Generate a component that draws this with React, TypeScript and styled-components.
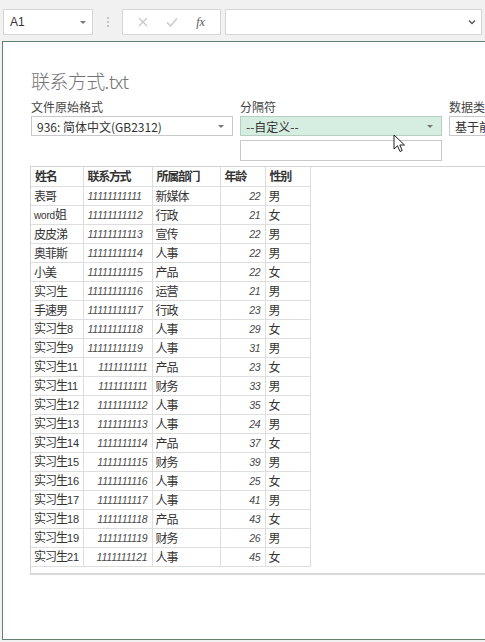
import React from "react";
import styled, { createGlobalStyle } from "styled-components";

const Global = createGlobalStyle`
  html, body { margin: 0; padding: 0; overflow: hidden; background: #f1f1f1; }
  body { font-family: "Noto Sans CJK SC", "Noto Sans", sans-serif; color: #333; }
  * { box-sizing: border-box; }
`;

const Page = styled.div`
  width: 485px;
  height: 642px;
  position: relative;
  overflow: hidden;
  background: #f1f1f1;
`;

const Toolbar = styled.div`
  height: 41px;
  display: flex;
  align-items: flex-start;
  padding: 9px 3px 0 3px;
`;

const NameBox = styled.div`
  width: 90px;
  height: 26px;
  background: #fff;
  border: 1px solid #d6d6d6;
  display: flex;
  align-items: center;
  justify-content: space-between;
  padding: 0 6px 0 6px;
  font-family: "Liberation Sans", Arial, sans-serif;
  font-size: 12px;
  color: #333;
`;

const Caret = styled.span`
  width: 0;
  height: 0;
  border-left: 3px solid transparent;
  border-right: 3px solid transparent;
  border-top: 3px solid #777;
`;

const Dots = styled.div`
  width: 29px;
  height: 26px;
  display: flex;
  flex-direction: column;
  align-items: center;
  justify-content: center;
  gap: 2px;
  & > i { width: 2px; height: 2px; background: #c4c4c4; display: block; }
`;

const FxBox = styled.div`
  width: 99px;
  height: 26px;
  background: #fff;
  border: 1px solid #d6d6d6;
  display: flex;
  align-items: center;
  justify-content: space-around;
  padding: 0 6px;
`;

const FxText = styled.span`
  font-family: "Liberation Serif", serif;
  font-style: italic;
  font-size: 12px;
  color: #555;
`;

const FormulaInput = styled.div`
  flex: 1;
  height: 26px;
  margin-left: 4px;
  background: #fff;
  border: 1px solid #d6d6d6;
  display: flex;
  align-items: center;
  justify-content: flex-end;
  padding-right: 5px;
`;

const Dialog = styled.div`
  margin-left: 2px;
  height: 599px;
  background: #fff;
  border: 1px solid #61806f;
  border-right: none;
  padding: 29px 0 0 28px;
`;

const Title = styled.div`
  font-size: 19px;
  line-height: 19px;
  height: 19px;
  color: #747474;
  font-weight: 300;
  letter-spacing: -0.6px;
  white-space: nowrap;
`;

const OptionsRow = styled.div`
  display: grid;
  grid-template-columns: 202px 202px 202px;
  column-gap: 7px;
  margin-top: 10px;
  white-space: nowrap;
`;

const Field = styled.div`
  display: flex;
  flex-direction: column;
`;

const Label = styled.div`
  font-size: 12px;
  line-height: 14px;
  color: #444;
  height: 14px;
`;

const Select = styled.div<{ $active?: boolean }>`
  margin-top: 2px;
  height: 20px;
  border: 1px solid ${(p) => (p.$active ? "#b7cfc1" : "#c9c9c9")};
  background: ${(p) => (p.$active ? "#d6ede2" : "#fff")};
  display: flex;
  align-items: center;
  justify-content: space-between;
  padding: 0 8px 0 5px;
  font-size: 12px;
  color: #333;
  font-family: "Noto Sans CJK SC", sans-serif;
`;

const SmallCaret = styled.span`
  width: 0;
  height: 0;
  border-left: 3px solid transparent;
  border-right: 3px solid transparent;
  border-top: 3px solid #777;
`;

const TextInput = styled.div`
  margin-top: 4px;
  height: 21px;
  border: 1px solid #c9c9c9;
  background: #fff;
`;

const Preview = styled.div`
  margin-top: 5px;
  margin-left: -1px;
  border-top: 1px solid #d4d4d4;
  border-left: 1px solid #d4d4d4;
  border-bottom: 2px solid #d9d9d9;
  padding-bottom: 6px;
`;

const Table = styled.table`
  border-collapse: collapse;
  table-layout: fixed;
  width: 279px;
  border-right: 1px solid #dadada;
`;

const Tr = styled.tr`
  height: 19px;
`;

const Th = styled.th<{ $w: number }>`
  width: ${(p) => p.$w}px;
  height: 18px;
  padding: 0 3px 0 4px;
  text-align: left;
  font-size: 12px;
  font-weight: 700;
  letter-spacing: -1.3px;
  color: #333;
  border: 1px solid #dedede;
  border-top: none;
  border-left: none;
  line-height: 16px;
  white-space: nowrap;
  overflow: hidden;
`;

const Td = styled.td<{ $num?: boolean; $right?: boolean }>`
  height: 18px;
  padding: 0 4px 0 ${(p) => (p.$num ? "4px" : "3px")};
  border: 1px solid #dedede;
  border-left: none;
  text-align: ${(p) => (p.$right ? "right" : "left")};
  font-size: ${(p) => (p.$num ? "10.5px" : "12px")};
  font-style: ${(p) => (p.$num ? "italic" : "normal")};
  font-family: ${(p) =>
    p.$num ? '"Liberation Sans", Arial, sans-serif' : '"Noto Sans CJK SC", sans-serif'};
  letter-spacing: ${(p) => (p.$num ? "-0.2px" : "-1px")};
  color: ${(p) => (p.$num ? "#4a4a4a" : "#333")};
  line-height: 16px;
  white-space: nowrap;
  overflow: hidden;
`;

const Latin = styled.span<{ $size: number }>`
  font-family: "Liberation Sans", Arial, sans-serif;
  font-size: ${(p) => p.$size}px;
  letter-spacing: -0.2px;
  line-height: 16px;
`;

const Cursor = styled.svg`
  position: absolute;
  left: 393px;
  top: 134px;
`;

type Row = [string, string, string, number, string];

const rows: Row[] = [
  ["表哥", "11111111111", "新媒体", 22, "男"],
  ["word姐", "11111111112", "行政", 21, "女"],
  ["皮皮涕", "11111111113", "宣传", 22, "男"],
  ["奥菲斯", "11111111114", "人事", 22, "男"],
  ["小美", "11111111115", "产品", 22, "女"],
  ["实习生", "11111111116", "运营", 21, "男"],
  ["手速男", "11111111117", "行政", 23, "男"],
  ["实习生8", "11111111118", "人事", 29, "女"],
  ["实习生9", "11111111119", "人事", 31, "男"],
  ["实习生11", "1111111111", "产品", 23, "女"],
  ["实习生11", "1111111111", "财务", 33, "男"],
  ["实习生12", "1111111112", "人事", 35, "女"],
  ["实习生13", "1111111113", "人事", 24, "男"],
  ["实习生14", "1111111114", "产品", 37, "女"],
  ["实习生15", "1111111115", "财务", 39, "男"],
  ["实习生16", "1111111116", "人事", 25, "女"],
  ["实习生17", "1111111117", "人事", 41, "男"],
  ["实习生18", "1111111118", "产品", 43, "女"],
  ["实习生19", "1111111119", "财务", 26, "男"],
  ["实习生21", "1111111121", "人事", 45, "女"],
];

function NameCell({ name }: { name: string }) {
  const m = name.match(/^([A-Za-z]+)(.*)$/);
  if (m) {
    return (
      <>
        <Latin $size={10}>{m[1]}</Latin>
        {m[2]}
      </>
    );
  }
  const n = name.match(/^(.*?)(\d+)$/);
  if (n) {
    return (
      <>
        {n[1]}
        <Latin $size={11}>{n[2]}</Latin>
      </>
    );
  }
  return <>{name}</>;
}

export default function App() {
  return (
    <Page>
      <Global />
      <Toolbar>
        <NameBox>
          <span>A1</span>
          <Caret />
        </NameBox>
        <Dots>
          <i />
          <i />
          <i />
        </Dots>
        <FxBox>
          <svg width="10" height="10" viewBox="0 0 10 10">
            <path d="M1 1 L9 9 M9 1 L1 9" stroke="#c8c8c8" strokeWidth="1.3" />
          </svg>
          <svg width="12" height="10" viewBox="0 0 12 10">
            <path d="M1 5.5 L4.5 9 L11 1.5" stroke="#c8c8c8" strokeWidth="1.4" fill="none" />
          </svg>
          <FxText>fx</FxText>
        </FxBox>
        <FormulaInput>
          <svg width="8" height="6" viewBox="0 0 8 6">
            <path d="M1 1.5 L4 4.5 L7 1.5" stroke="#555" strokeWidth="1.3" fill="none" />
          </svg>
        </FormulaInput>
      </Toolbar>
      <Dialog>
        <Title>联系方式.txt</Title>
        <OptionsRow>
          <Field>
            <Label>文件原始格式</Label>
            <Select>
              <span>936: 简体中文(GB2312)</span>
              <SmallCaret />
            </Select>
          </Field>
          <Field>
            <Label>分隔符</Label>
            <Select $active>
              <span>--自定义--</span>
              <SmallCaret />
            </Select>
            <TextInput />
          </Field>
          <Field>
            <Label>数据类型检测</Label>
            <Select>
              <span>基于前 200 行</span>
              <SmallCaret />
            </Select>
          </Field>
        </OptionsRow>
        <Preview>
          <Table>
            <thead>
              <Tr>
                <Th $w={52}>姓名</Th>
                <Th $w={69}>联系方式</Th>
                <Th $w={68}>所属部门</Th>
                <Th $w={45}>年龄</Th>
                <Th $w={45}>性别</Th>
              </Tr>
            </thead>
            <tbody>
              {rows.map((r, i) => (
                <Tr key={i}>
                  <Td>
                    <NameCell name={r[0]} />
                  </Td>
                  <Td $num $right={r[1].length < 11}>
                    {r[1]}
                  </Td>
                  <Td>{r[2]}</Td>
                  <Td $num $right>
                    {r[3]}
                  </Td>
                  <Td>{r[4]}</Td>
                </Tr>
              ))}
            </tbody>
          </Table>
        </Preview>
      </Dialog>
      <Cursor width="13" height="20" viewBox="0 0 13 20">
        <path
          d="M1 1 L1 15 L4.5 11.8 L7 17.5 L9.2 16.5 L6.8 11 L11.5 11 Z"
          fill="#fff"
          stroke="#222"
          strokeWidth="1"
          strokeLinejoin="round"
        />
      </Cursor>
    </Page>
  );
}
